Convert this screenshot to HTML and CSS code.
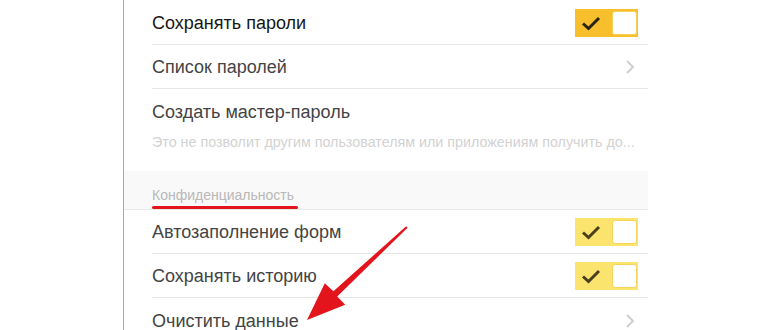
FILE: index.html
```html
<!DOCTYPE html>
<html lang="ru">
<head>
    <meta charset="UTF-8">
    <meta name="viewport" content="width=device-width, initial-scale=1.0">
    <title>Настройки</title>
    <link rel="stylesheet" href="styles.css">
</head>
<body>
    <div class="screen">
        <div class="row">
            <span class="label label-strong">Сохранять пароли</span>
            <span class="toggle toggle-on">
                <svg class="check" viewBox="0 0 20 16"><path d="M2 8.5 L7.5 13.5 L18 3" /></svg>
                <span class="knob"></span>
            </span>
        </div>
        <div class="row">
            <span class="label">Список паролей</span>
            <svg class="chevron" viewBox="0 0 10 16"><path d="M2 2 L8 8 L2 14" /></svg>
        </div>
        <div class="row row-last">
            <span class="label">Создать мастер-пароль</span>
        </div>
        <div class="hint">Это не позволит другим пользователям или приложениям получить до...</div>

        <div class="section">
            <span class="section-title">Конфиденциальность</span>
        </div>

        <div class="row">
            <span class="label">Автозаполнение форм</span>
            <span class="toggle toggle-pale">
                <svg class="check" viewBox="0 0 20 16"><path d="M2 8.5 L7.5 13.5 L18 3" /></svg>
                <span class="knob"></span>
            </span>
        </div>
        <div class="row">
            <span class="label">Сохранять историю</span>
            <span class="toggle toggle-pale">
                <svg class="check" viewBox="0 0 20 16"><path d="M2 8.5 L7.5 13.5 L18 3" /></svg>
                <span class="knob"></span>
            </span>
        </div>
        <div class="row row-last">
            <span class="label">Очистить данные</span>
            <svg class="chevron" viewBox="0 0 10 16"><path d="M2 2 L8 8 L2 14" /></svg>
        </div>
    </div>

    <!-- красная стрелка поверх списка -->
    <svg class="arrow" width="770" height="330" viewBox="0 0 770 330">
        <polygon fill="#e3141b" points="407.6,227.8 406.2,226.2 333.4,291.2 324.8,283.2 307,320 345.2,304.8 337.2,296.4" />
    </svg>
</body>
</html>
```

FILE: styles.css
```css
body {
    margin: 0;
    background: #ffffff;
    font-family: 'Liberation Sans', Arial, sans-serif;
    overflow: hidden;
    height: 330px;
}

.screen {
    margin-left: 123px;
    width: 525px;
    border-left: 1px solid #a8a8a8;
    height: 330px;
    padding-top: 1px;
    box-sizing: border-box;
}

.row {
    display: flex;
    align-items: center;
    justify-content: space-between;
    height: 43px;
    margin-left: 28px;
    padding-right: 10px;
    border-bottom: 1px solid #e6e6e6;
}

.row-last {
    border-bottom: none;
    height: 45px;
}

.label {
    font-size: 18px;
    color: #444444;
    padding-top: 2px;
}

.label-strong {
    color: #161616;
}

.toggle {
    display: flex;
    align-items: center;
    justify-content: space-between;
    width: 63px;
    height: 28px;
    box-sizing: border-box;
    padding: 2px 1px 2px 6px;
}

.toggle-on {
    background: #f8bf2c;
}

.toggle-pale {
    background: #fbe46e;
}

.check {
    width: 20px;
    height: 16px;
    fill: none;
    stroke: #2a2418;
    stroke-width: 3;
}

.toggle-pale .check {
    stroke: #4a4020;
}

.knob {
    width: 25px;
    height: 24px;
    background: #ffffff;
    border: 1px solid #f3d35a;
    border-radius: 3px;
    box-sizing: border-box;
}

.chevron {
    width: 10px;
    height: 16px;
    margin-right: 3px;
    fill: none;
    stroke: #cfcfcf;
    stroke-width: 2;
}

.hint {
    margin-left: 28px;
    height: 37px;
    font-size: 14.3px;
    color: #d2d2d2;
    white-space: nowrap;
}

.section {
    height: 38px;
    background: #f9f9f9;
    padding-left: 28px;
    display: flex;
    align-items: flex-end;
    border-bottom: 1px solid #e9e9e9;
}

.section-title {
    font-size: 14px;
    color: #b8b8b8;
    padding-bottom: 6px;
    position: relative;
}

/* подчеркивание маркером */
.section-title::after {
    content: "";
    position: absolute;
    left: 0;
    right: -4px;
    bottom: 0;
    height: 3px;
    border-radius: 2px;
    background: #e3141b;
}

.arrow {
    position: absolute;
    left: 0;
    top: 0;
    pointer-events: none;
}
```
